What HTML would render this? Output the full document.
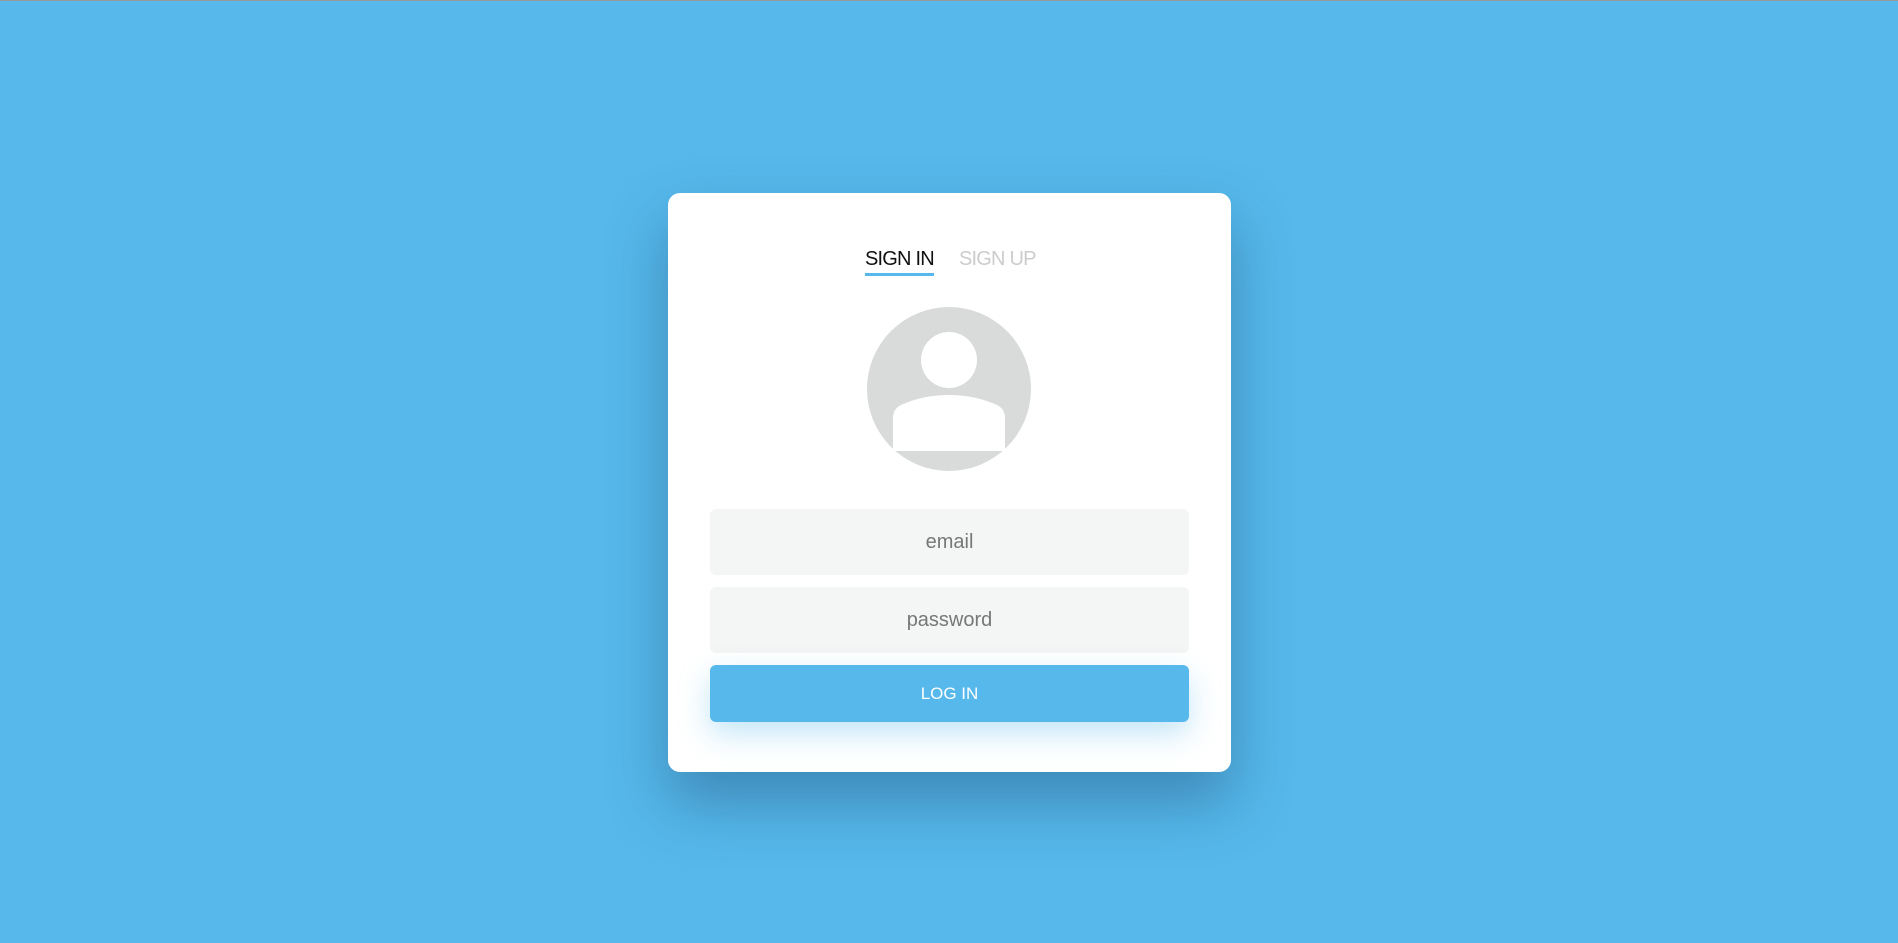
<!DOCTYPE html>
<html><head><meta charset="utf-8"><style>
html,body{margin:0;padding:0;width:1898px;height:943px;overflow:hidden;background:#56b8eb;font-family:"Liberation Sans",sans-serif}
.card{position:absolute;left:668px;top:193px;width:563px;height:579px;background:#fff;border-radius:12px;box-shadow:0 30px 60px rgba(30,80,120,.45)}
.tab{position:absolute;top:248px;font-size:20px;letter-spacing:-0.8px}
.in{position:absolute;left:710px;width:479px;height:66px;background:#f4f5f5;border-radius:6px;color:#777;font-size:20px;text-align:center;line-height:66px}
.btn{position:absolute;left:710px;top:665px;width:479px;height:57px;background:#56b8eb;border-radius:6px;color:#fff;font-size:17px;text-align:center;line-height:57px;box-shadow:0 12px 30px rgba(86,184,235,.35)}
</style></head><body>
<div style="position:absolute;left:0;top:0;width:1898px;height:1px;background:#999"></div>
<div class="card"></div>
<div class="tab" style="left:865px;color:#111">SIGN IN</div>
<div style="position:absolute;left:865px;top:273px;width:69px;height:3px;background:#56b8eb"></div>
<div class="tab" style="left:959px;color:#ccc">SIGN UP</div>
<svg style="position:absolute;left:867px;top:307px" width="164" height="164" viewBox="0 0 164 164">
<defs><clipPath id="c"><circle cx="82" cy="82" r="82"/></clipPath></defs>
<circle cx="82" cy="82" r="82" fill="#d9dada"/>
<g clip-path="url(#c)">
<ellipse cx="82" cy="53" rx="28" ry="28" fill="#fff"/>
<path d="M26 144 V111 Q26 102 34 98 Q56 88 82 88 Q108 88 130 98 Q138 102 138 111 V144 Z" fill="#fff"/>
</g>
</svg>
<div class="in" style="top:509px">email</div>
<div class="in" style="top:587px">password</div>
<div class="btn">LOG IN</div>
</body></html>
